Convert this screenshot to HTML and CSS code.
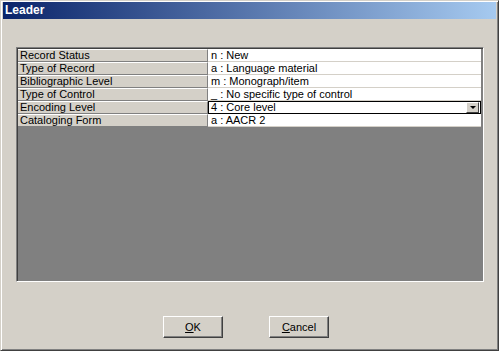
FILE: index.html
```html
<!DOCTYPE html>
<html lang="en">
<head>
    <meta charset="UTF-8">
    <title>Leader</title>
    <link rel="stylesheet" href="styles.css">
</head>
<body>
<div class="window">
    <div class="title-bar">Leader</div>

    <div class="content">
        <div class="grid">
            <div class="row">
                <div class="label">Record Status</div>
                <div class="value">n : New</div>
            </div>
            <div class="row">
                <div class="label">Type of Record</div>
                <div class="value">a : Language material</div>
            </div>
            <div class="row">
                <div class="label">Bibliographic Level</div>
                <div class="value">m : Monograph/item</div>
            </div>
            <div class="row">
                <div class="label">Type of Control</div>
                <div class="value">_ : No specific type of control</div>
            </div>
            <div class="row">
                <div class="label">Encoding Level</div>
                <div class="value editing">
                    <span>4 : Core level</span>
                    <span class="drop-btn"><span class="arrow"></span></span>
                </div>
            </div>
            <div class="row">
                <div class="label">Cataloging Form</div>
                <div class="value">a : AACR 2</div>
            </div>
            <div class="empty"></div>
        </div>

        <div class="buttons">
            <button type="button"><u>O</u>K</button>
            <button type="button"><u>C</u>ancel</button>
        </div>
    </div>
</div>
</body>
</html>
```

FILE: styles.css
```css
body {
    margin: 0;
    font-family: 'Liberation Sans', Arial, sans-serif;
    font-size: 11px;
    color: #000;
    background-color: #d4d0c8;
}

.window {
    width: 499px;
    height: 351px;
    box-sizing: border-box;
    display: flex;
    flex-direction: column;
    background-color: #d4d0c8;
    border: 1px solid;
    border-color: #d4d0c8 #404040 #404040 #d4d0c8;
    box-shadow: inset 1px 1px #fff, inset -1px -1px #808080;
    padding: 1px 2px 2px 2px;
}

.title-bar {
    height: 17px;
    line-height: 17px;
    padding-left: 2px;
    color: #fff;
    font-weight: bold;
    font-size: 12px;
    background: linear-gradient(to right, #0a246a, #a6caf0);
}

.content {
    flex: 1;
    display: flex;
    flex-direction: column;
    padding: 28px 12px 0 13px;
}

.grid {
    height: 235px;
    display: flex;
    flex-direction: column;
    box-sizing: border-box;
    border: 1px solid;
    border-color: #808080 #fff #fff #808080;
    box-shadow: inset 1px 1px #404040;
    padding: 1px 0 0 1px;
    background-color: #808080;
}

.row {
    display: flex;
    height: 13px;
    line-height: 12px;
}

.label {
    width: 190px;
    padding-left: 2px;
    background-color: #d4d0c8;
    border-top: 1px solid #fff;
    border-bottom: 1px solid #808080;
    border-right: 1px solid #808080;
    box-sizing: border-box;
    line-height: 11px;
}

.value {
    flex: 1;
    padding-left: 3px;
    background-color: #fff;
    border-bottom: 1px solid #d4d0c8;
    box-sizing: border-box;
    margin-right: 2px;
}

.value.editing {
    display: flex;
    align-items: center;
    justify-content: space-between;
    border: 1px solid #000;
    padding-left: 2px;
    line-height: 11px;
}

.drop-btn {
    width: 13px;
    height: 11px;
    margin-right: 1px;
    box-sizing: border-box;
    background-color: #d4d0c8;
    border: 1px solid;
    border-color: #fff #404040 #404040 #fff;
    display: flex;
    align-items: center;
    justify-content: center;
}

.arrow {
    width: 0;
    height: 0;
    border-left: 3px solid transparent;
    border-right: 3px solid transparent;
    border-top: 3px solid #000;
}

.empty {
    flex: 1;
    background-color: #808080;
}

.buttons {
    display: flex;
    justify-content: center;
    gap: 46px;
    margin-top: 34px;
    padding-right: 8px;
}

button {
    width: 60px;
    height: 22px;
    padding: 0;
    font-family: 'Liberation Sans', Arial, sans-serif;
    font-size: 11px;
    color: #000;
    background-color: #d4d0c8;
    border: 1px solid;
    border-color: #fff #404040 #404040 #fff;
    box-shadow: inset -1px -1px #808080;
}
```
